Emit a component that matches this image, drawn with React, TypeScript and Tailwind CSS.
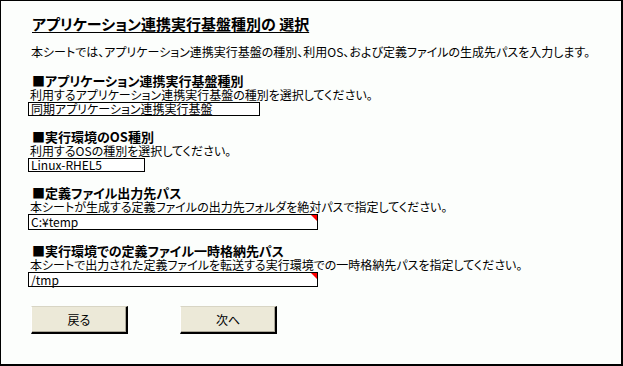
import React from 'react';

interface FieldProps {
  heading: string;
  description: string;
  value: string;
  width: string;
  height: string;
  marker?: boolean;
}

const Field: React.FC<FieldProps> = ({ heading, description, value, width, height, marker }) => (
  <div className="flex flex-col">
    <div className="ml-[4px] h-[14px] text-[13px] leading-[14px] font-bold">■{heading}</div>
    <div className="ml-[2px] h-[14px] text-[12px] leading-[13px]">{description}</div>
    <div className={`relative ${width} ${height} border border-black bg-white pl-[2px] text-[12px] leading-[12px] flex items-center`}>
      {value}
      {marker && (
        <span className="absolute right-0 top-0 w-[6px] h-[6px] bg-[#ff0000] [clip-path:polygon(0_0,100%_0,100%_100%)]" />
      )}
    </div>
  </div>
);

const App: React.FC = () => {
  return (
    <div
      className="w-[623px] h-[366px] box-border bg-[#fcfefc] border-l border-t border-r-2 border-b-2 border-black text-black pl-[27px] [font-feature-settings:'palt'] flex flex-col"
      style={{ fontFamily: '"Noto Sans CJK JP", "Noto Sans", sans-serif' }}
    >
      <h1 className="ml-[4px] mt-[13px] h-[20px] text-[15px] leading-[20px] font-bold underline underline-offset-[2px] decoration-1">
        アプリケーション連携実行基盤種別の 選択
      </h1>
      <p className="ml-[3px] mt-[11px] h-[14px] text-[12px] leading-[14px]">
        本シートでは、アプリケーション連携実行基盤の種別、利用OS、および定義ファイルの生成先パスを入力します。
      </p>

      <div className="mt-[15px] flex flex-col gap-[14px]">
        <Field
          heading="アプリケーション連携実行基盤種別"
          description="利用するアプリケーション連携実行基盤の種別を選択してください。"
          value="同期アプリケーション連携実行基盤"
          width="w-[232px]"
          height="h-[14px]"
        />
        <Field
          heading="実行環境のOS種別"
          description="利用するOSの種別を選択してください。"
          value="Linux-RHEL5"
          width="w-[117px]"
          height="h-[14px]"
        />
        <Field
          heading="定義ファイル出力先パス"
          description="本シートが生成する定義ファイルの出力先フォルダを絶対パスで指定してください。"
          value="C:¥temp"
          width="w-[290px]"
          height="h-[16px]"
          marker
        />
        <Field
          heading="実行環境での定義ファイル一時格納先パス"
          description="本シートで出力された定義ファイルを転送する実行環境での一時格納先パスを指定してください。"
          value="/tmp"
          width="w-[290px]"
          height="h-[15px]"
          marker
        />
      </div>

      <div className="ml-[3px] mt-[19px] flex gap-[52px]">
        <button className="w-[97px] h-[28px] bg-[#ece9d8] border-t border-l border-t-[#d8d5c4] border-l-white border-r-2 border-b-2 border-r-black border-b-black shadow-[inset_-1px_-1px_0_#aca899] text-[12px]">
          戻る
        </button>
        <button className="w-[97px] h-[28px] bg-[#ece9d8] border-t border-l border-t-[#d8d5c4] border-l-white border-r-2 border-b-2 border-r-black border-b-black shadow-[inset_-1px_-1px_0_#aca899] text-[12px]">
          次へ
        </button>
      </div>
    </div>
  );
};

export default App;
